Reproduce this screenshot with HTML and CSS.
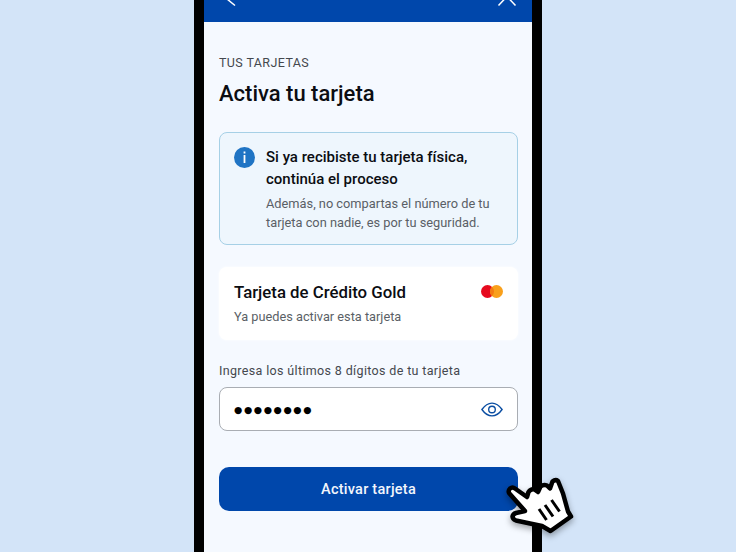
FILE: index.html
```html
<!DOCTYPE html>
<html lang="es">
<head>
    <meta charset="UTF-8">
    <title>Activa tu tarjeta</title>
    <link rel="stylesheet" href="styles.css">
</head>
<body>
<div class="phone">
    <header class="topbar">
        <svg width="12" height="16" viewBox="0 0 12 16"><path d="M1 -1L9 5.500" fill="none" stroke="#fff" stroke-width="1.500"/></svg>
        <svg width="20" height="16" viewBox="0 0 20 16"><path d="M1.500 5.500L10 -3.500L18.500 5.500" fill="none" stroke="#fff" stroke-width="1.500"/></svg>
    </header>
    <main class="content">
        <p class="eyebrow">TUS TARJETAS</p>
        <h1>Activa tu tarjeta</h1>

        <section class="notice">
            <svg class="notice-icon" width="21" height="21" viewBox="0 0 21 21">
                <circle cx="10.500" cy="10.500" r="10.500" fill="#1f74c4"/>
                <rect x="9.600" y="4.500" width="1.800" height="2" fill="#fff"/>
                <rect x="9.600" y="8" width="1.800" height="8" fill="#fff"/>
            </svg>
            <div>
                <h2>Si ya recibiste tu tarjeta física, continúa el proceso</h2>
                <p>Además, no compartas el número de tu tarjeta con nadie, es por tu seguridad.</p>
            </div>
        </section>

        <section class="card">
            <div>
                <h3>Tarjeta de Crédito Gold</h3>
                <p>Ya puedes activar esta tarjeta</p>
            </div>
            <svg width="22" height="13" viewBox="0 0 22 13">
                <circle cx="6.500" cy="6.500" r="6.500" fill="#e60a1e"/>
                <circle cx="15.500" cy="6.500" r="6.500" fill="#f9a01b"/>
                <path d="M11 1.800a6.500 6.500 0 0 1 0 9.400a6.500 6.500 0 0 1 0-9.400z" fill="#f47a12"/>
            </svg>
        </section>

        <label class="field-label" for="digits">Ingresa los últimos 8 dígitos de tu tarjeta</label>
        <div class="field">
            <span class="dots" id="digits">●●●●●●●●</span>
            <svg width="22" height="15" viewBox="0 0 24 16" fill="none" stroke="#0b4ea2" stroke-width="1.500">
                <path d="M1 8C4.500 3 8 1 12 1s7.500 2 11 7c-3.500 5-7 7-11 7S4.500 13 1 8z"/>
                <circle cx="12" cy="8" r="3.600"/>
            </svg>
        </div>

        <button class="submit">Activar tarjeta</button>
    </main>
</div>

<svg class="cursor" width="70" height="66" viewBox="0 0 70 66">
    <path d="M5 14.500Q7.500 12.500 10 14.500L22 23L23.500 18Q26 14.500 29.500 15.500L33 18L35.500 12.500Q38.500 10 42 11.500L45 14.500L47.500 7.500Q50.500 5 53 7L58 19.500L63 37.500L66 42.500L45.500 57L37 52L25 49.500L11 46.500Q7.500 45 7.500 42.500Q8 40 11 39L20 37L4 19Q3 16.500 5 14.500z" fill="#fff" stroke="#000" stroke-width="4.500" stroke-linejoin="round"/>
    <path d="M34 35L41.500 46M40 31L48 42.500M46.500 26L54.500 37.500" stroke="#000" stroke-width="3" fill="none"/>
</svg>
</body>
</html>
```
FILE: styles.css
```css
html, body {
    height: 100%;
}
body {
    margin: 0;
    background-color: #d3e4f8;
    font-family: 'Roboto', sans-serif;
    color: #0b0d12;
    overflow: hidden;
    display: flex;
    justify-content: center;
    position: relative;
}
.phone {
    box-sizing: border-box;
    width: 348px;
    height: 552px;
    border-left: 10px solid #000;
    border-right: 10px solid #000;
    background-color: #f5f9ff;
}
.topbar {
    height: 22px;
    background-color: #0047ab;
    display: flex;
    justify-content: space-between;
    padding: 0 15px 0 22px;
}
.content {
    padding: 33px 14px 0 15px;
}
.eyebrow {
    margin: 0;
    font-size: 12.500px;
    line-height: 15px;
    letter-spacing: 0.4px;
    color: #44484e;
}
h1 {
    margin: 10px 0 0;
    font-size: 22px;
    line-height: 28px;
    font-weight: 500;
}
.notice {
    box-sizing: border-box;
    height: 113px;
    margin-top: 24px;
    padding: 14px;
    display: flex;
    gap: 11px;
    background-color: #eef6fd;
    border: 1px solid #a6d0e6;
    border-radius: 8px;
}
.notice-icon {
    flex: none;
}
.notice h2 {
    margin: -1px 0 0;
    font-size: 15px;
    line-height: 22px;
    font-weight: 500;
}
.notice p {
    margin: 4px 0 0;
    font-size: 12.800px;
    line-height: 19px;
    color: #5a5f66;
}
.card {
    box-sizing: border-box;
    height: 73px;
    margin-top: 22px;
    padding: 14px 15px 0;
    display: flex;
    justify-content: space-between;
    align-items: flex-start;
    background-color: #fff;
    border-radius: 8px;
    box-shadow: 0 0 3px #fff;
}
.card svg {
    margin-top: 4px;
}
.card h3 {
    margin: 0;
    font-size: 16.800px;
    line-height: 22px;
    font-weight: 500;
}
.card p {
    margin: 6px 0 0;
    font-size: 12.750px;
    line-height: 16px;
    color: #5a5f66;
}
.field-label {
    display: block;
    margin-top: 23px;
    font-size: 12.500px;
    line-height: 16px;
    letter-spacing: 0.35px;
    color: #44484e;
}
.field {
    box-sizing: border-box;
    height: 44px;
    margin-top: 8px;
    padding: 0 14px;
    display: flex;
    justify-content: space-between;
    align-items: center;
    background-color: #fff;
    border: 1px solid #a9adb3;
    border-radius: 8px;
}
.dots {
    font-family: 'DejaVu Sans', sans-serif;
    font-size: 9.500px;
    letter-spacing: 1.600px;
    color: #000;
}
.submit {
    display: block;
    width: 100%;
    height: 44px;
    margin-top: 36px;
    background-color: #0047ab;
    color: #f2f6fc;
    border: none;
    border-radius: 10px;
    font-family: inherit;
    font-size: 14.500px;
    font-weight: 500;
    letter-spacing: 0.25px;
}
.cursor {
    position: absolute;
    left: 505px;
    top: 474px;
    filter: drop-shadow(0 3px 3px rgba(0, 0, 0, 0.35));
}
```
